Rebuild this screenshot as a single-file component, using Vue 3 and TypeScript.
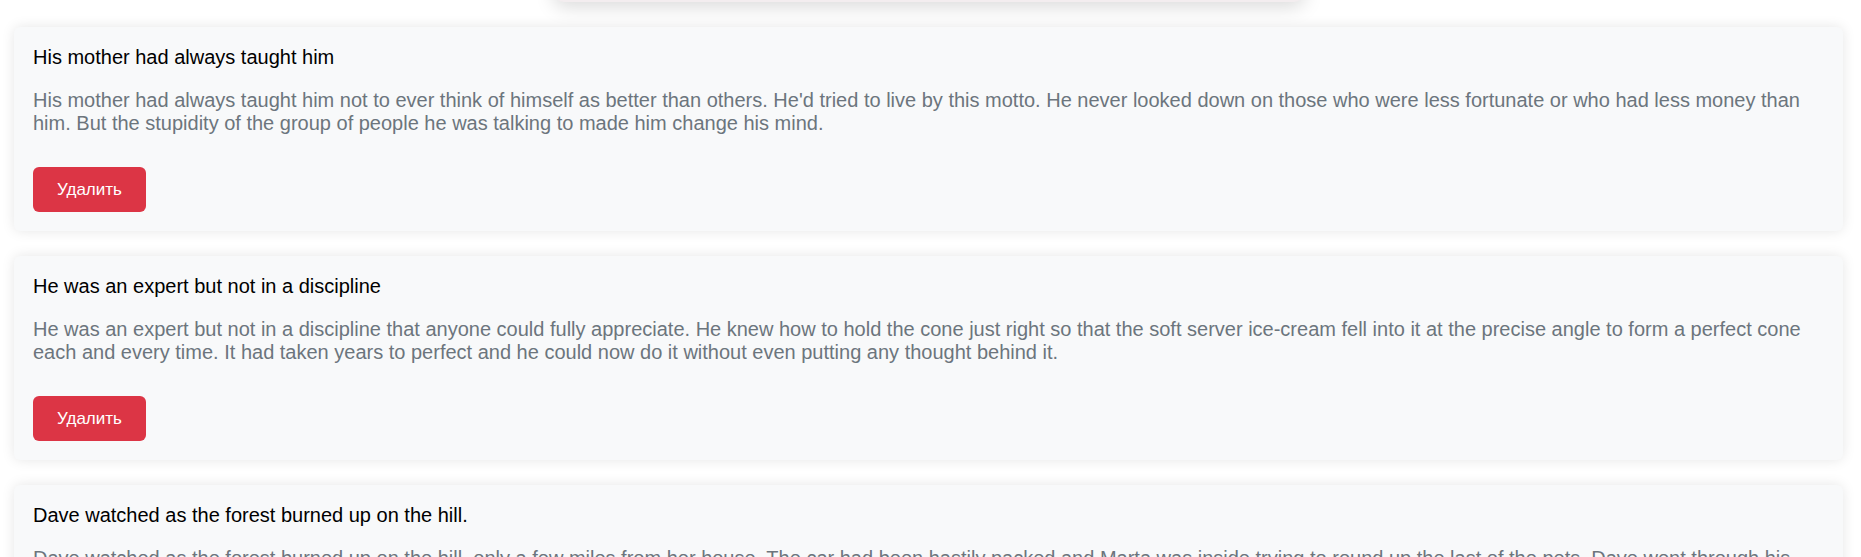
<script setup lang="ts">
import { ref } from 'vue'

interface Post {
  id: number
  title: string
  body: string
}

const posts = ref<Post[]>([
  {
    id: 1,
    title: 'His mother had always taught him',
    body: "His mother had always taught him not to ever think of himself as better than others. He'd tried to live by this motto. He never looked down on those who were less fortunate or who had less money than him. But the stupidity of the group of people he was talking to made him change his mind.",
  },
  {
    id: 2,
    title: 'He was an expert but not in a discipline',
    body: 'He was an expert but not in a discipline that anyone could fully appreciate. He knew how to hold the cone just right so that the soft server ice-cream fell into it at the precise angle to form a perfect cone each and every time. It had taken years to perfect and he could now do it without even putting any thought behind it.',
  },
  {
    id: 3,
    title: 'Dave watched as the forest burned up on the hill.',
    body: 'Dave watched as the forest burned up on the hill, only a few miles from her house. The car had been hastily packed and Marta was inside trying to round up the last of the pets. Dave went through his',
  },
])

function removePost(id: number) {
  posts.value = posts.value.filter((post) => post.id !== id)
}
</script>

<template>
  <main class="page">
    <div class="panel"></div>
    <section class="posts">
      <article v-for="post in posts" :key="post.id" class="card">
        <h2 class="title">{{ post.title }}</h2>
        <p class="body">{{ post.body }}</p>
        <button type="button" class="remove" @click="removePost(post.id)">Удалить</button>
      </article>
    </section>
  </main>
</template>

<style>
body {
  margin: 0;
  background: #fff;
}
</style>

<style scoped>
.page {
  box-sizing: border-box;
  height: 100vh;
  overflow: hidden;
  padding: 0 18px 0 14px;
  font-family: "Liberation Sans", Arial, sans-serif;
  font-size: 20px;
  line-height: 23px;
}

/* The panel is scrolled past: only its lower edge and shadow show. */
.panel {
  width: 100%;
  max-width: 750px;
  height: 60px;
  margin: -58px auto 25px;
  border-radius: 10px;
  background: #f3edef;
  box-shadow: 0 5px 19px rgba(0, 0, 0, 0.15);
}

.posts {
  display: flex;
  flex-direction: column;
  gap: 25px;
}

.card {
  padding: 19px;
  border-radius: 6px;
  background: #f8f9fa;
  box-shadow: 0 0 13px rgba(0, 0, 0, 0.1);
}

.title {
  margin: 0 0 20px;
  font-size: 20px;
  font-weight: 400;
  color: #000;
}

.body {
  margin: 0 0 32px;
  color: #6c757d;
}

.remove {
  display: block;
  padding: 12px 24px;
  border: 0;
  border-radius: 6px;
  background: #dc3545;
  color: #fff;
  font-family: inherit;
  font-size: 17px;
  line-height: 21px;
  cursor: pointer;
}
</style>
